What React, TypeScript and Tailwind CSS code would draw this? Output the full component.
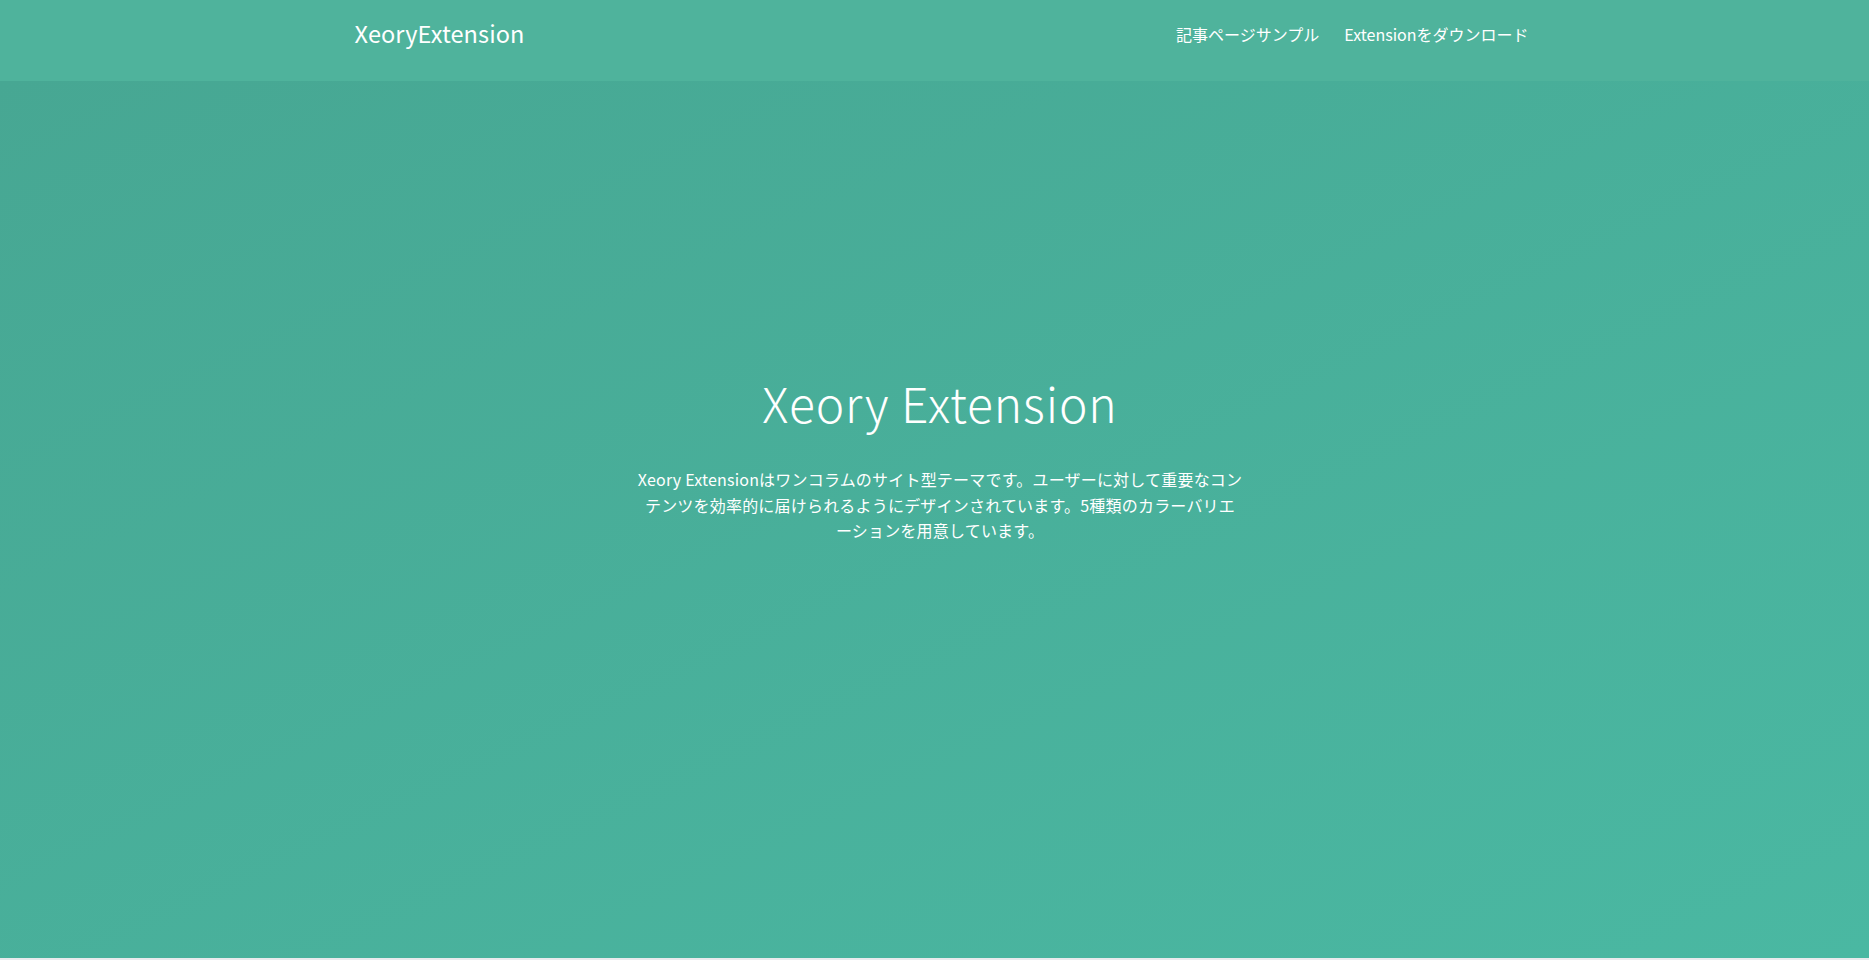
const NAV_ITEMS = ['記事ページサンプル', 'Extensionをダウンロード'];

const font = {
  fontFamily: '"Noto Sans CJK JP", "Noto Sans", sans-serif',
};

function Header() {
  return (
    <header className="h-[81px] bg-[#4fb39c]">
      <div className="mx-auto flex h-full w-[1200px] items-center justify-between pb-[14px] pl-5 pr-[6px]">
        <a href="#" className="text-[23.5px] leading-none tracking-[0.1px] text-white">
          XeoryExtension
        </a>
        <nav className="flex items-center gap-[25px]">
          {NAV_ITEMS.map((item) => (
            <a key={item} href="#" className="text-[16px] leading-none text-white">
              {item}
            </a>
          ))}
        </nav>
      </div>
    </header>
  );
}

function Hero() {
  return (
    <section className="flex h-[877px] flex-col items-center bg-gradient-to-br from-[#47a793] to-[#4ab8a2] pl-[11px] pt-[297px] text-white">
      <h1 className="text-[48px] font-light leading-none tracking-[0.9px]">Xeory Extension</h1>
      <p className="mt-[41px] w-[606px] text-center text-[16px] leading-[25.6px] tracking-[0.2px]">
        Xeory Extensionはワンコラムのサイト型テーマです。ユーザーに対して重要なコンテンツを効率的に届けられるようにデザインされています。5種類のカラーバリエーションを用意しています。
      </p>
    </section>
  );
}

export default function App() {
  return (
    <div style={font} className="min-h-screen bg-[#e9eaed]">
      <Header />
      <Hero />
      <div className="h-[2px] bg-[#e9eaed]" />
    </div>
  );
}
